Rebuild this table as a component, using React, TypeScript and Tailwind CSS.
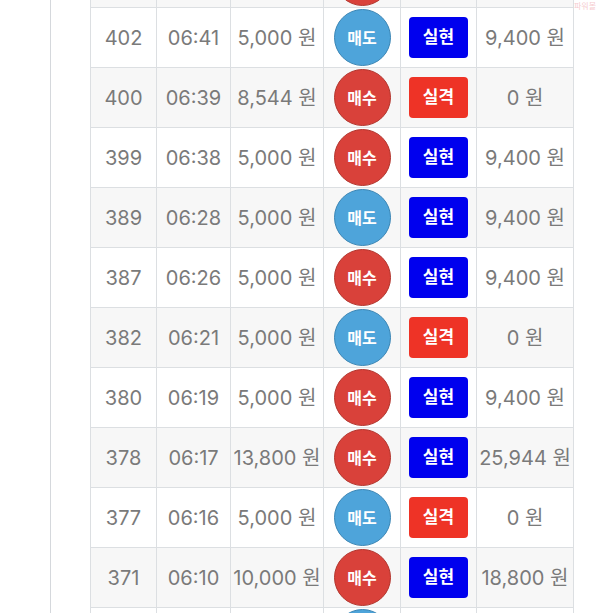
import React from 'react';

type Row = {
    no: number | null;
    time: string;
    bet: string;
    side: '매수' | '매도';
    result: '실현' | '실격' | null;
    payout: string;
};

// first and last rows are only partly in view, so they carry no text
const ROWS: Row[] = [
    { no: null, time: '', bet: '', side: '매수', result: null, payout: '' },
    { no: 402, time: '06:41', bet: '5,000 원', side: '매도', result: '실현', payout: '9,400 원' },
    { no: 400, time: '06:39', bet: '8,544 원', side: '매수', result: '실격', payout: '0 원' },
    { no: 399, time: '06:38', bet: '5,000 원', side: '매수', result: '실현', payout: '9,400 원' },
    { no: 389, time: '06:28', bet: '5,000 원', side: '매도', result: '실현', payout: '9,400 원' },
    { no: 387, time: '06:26', bet: '5,000 원', side: '매수', result: '실현', payout: '9,400 원' },
    { no: 382, time: '06:21', bet: '5,000 원', side: '매도', result: '실격', payout: '0 원' },
    { no: 380, time: '06:19', bet: '5,000 원', side: '매수', result: '실현', payout: '9,400 원' },
    { no: 378, time: '06:17', bet: '13,800 원', side: '매수', result: '실현', payout: '25,944 원' },
    { no: 377, time: '06:16', bet: '5,000 원', side: '매도', result: '실격', payout: '0 원' },
    { no: 371, time: '06:10', bet: '10,000 원', side: '매수', result: '실현', payout: '18,800 원' },
    { no: null, time: '', bet: '', side: '매도', result: null, payout: '' },
];

const cell = 'flex items-center justify-center border-r border-[#dcdfe2] whitespace-nowrap';

export default function App() {
    return (
        <div
            className="relative h-[613px] w-[600px] overflow-hidden bg-white text-[#7a7a7a]"
            style={{ fontFamily: 'Inter, "Noto Sans CJK KR", sans-serif' }}
        >
            {/* faint watermark top right */}
            <span className="absolute right-[4px] top-[2px] text-[8px] leading-none text-[#f3b8bd] opacity-70">
                파워볼
            </span>

            <div className="ml-[50px] flex h-full flex-col border-l border-[#d5d8dc] pl-[39px]">
                <div className="-mt-[52px] w-[484px] border-l border-[#dcdfe2]">
                    {ROWS.map((row, i) => (
                        <div
                            key={i}
                            className={`grid h-[60px] grid-cols-[66px_74px_93px_77px_76px_97px] border-b border-[#dcdfe2] text-[20px] ${
                                i % 2 === 0 ? 'bg-[#f7f7f7]' : 'bg-white'
                            }`}
                        >
                            <div className={cell}>{row.no}</div>
                            <div className={cell}>{row.time}</div>
                            <div className={cell}>{row.bet}</div>
                            <div className={cell}>
                                <span
                                    className={`flex h-[57px] w-[57px] items-center justify-center rounded-full border text-[16px] font-bold text-white ${
                                        row.side === '매수'
                                            ? 'border-[#b3352d] bg-[#d9413a]'
                                            : 'border-[#3b86b5] bg-[#4ea4da]'
                                    }`}
                                >
                                    {row.no !== null && row.side}
                                </span>
                            </div>
                            <div className={cell}>
                                {row.result && (
                                    <span
                                        className={`flex h-[41px] w-[59px] items-center justify-center rounded-[4px] text-[17px] font-bold text-white ${
                                            row.result === '실현' ? 'bg-[#0000ee]' : 'bg-[#ee3326]'
                                        }`}
                                    >
                                        {row.result}
                                    </span>
                                )}
                            </div>
                            <div className={cell}>{row.payout}</div>
                        </div>
                    ))}
                </div>
            </div>
        </div>
    );
}
